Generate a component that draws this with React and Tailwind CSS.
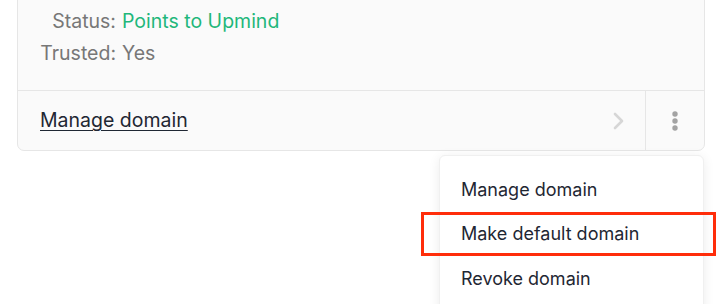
import React from 'react';

function Chevron() {
  return (
    <svg width="12" height="18" viewBox="0 0 12 18" fill="none">
      <path d="M2 2l7 7-7 7" stroke="#d6d6d6" strokeWidth="2.6" strokeLinecap="round" strokeLinejoin="round" />
    </svg>
  );
}

function Dots() {
  return (
    <svg width="6" height="20" viewBox="0 0 6 20" fill="#a3a3a3">
      <circle cx="3" cy="3" r="2.7" />
      <circle cx="3" cy="10" r="2.7" />
      <circle cx="3" cy="17" r="2.7" />
    </svg>
  );
}

export default function App() {
  return (
    <div className="relative w-[725px] h-[304px] overflow-hidden bg-white" style={{ fontFamily: 'Inter, "Noto Sans", sans-serif' }}>
      {/* Domain card */}
      <div className="ml-[17px] mt-[-12px] w-[688px] rounded-[7px] border border-[#e6e6e6] bg-[#fafafa]">
        <div className="grid grid-cols-[76px_1fr] gap-x-[6px] gap-y-[8px] pl-[22px] pt-[20px] pb-[25px] text-[19.5px] leading-[24px]">
          <span className="text-right text-[#777]">Status:</span>
          <span className="text-[#1fb77b]">Points to Upmind</span>
          <span className="text-right text-[#777]">Trusted:</span>
          <span className="text-[#777]">Yes</span>
        </div>
        <div className="flex h-[60px] border-t border-[#e6e6e6]">
          <div className="flex flex-1 items-center justify-between pl-[22px] pr-[20px]">
            <span className="text-[19.5px] text-[#1f2733] underline underline-offset-[3px] decoration-1">Manage domain</span>
            <Chevron />
          </div>
          <div className="flex w-[59px] items-center justify-center border-l border-[#e6e6e6]">
            <Dots />
          </div>
        </div>
      </div>

      {/* Dropdown menu */}
      <div className="absolute left-[439px] top-[155px] w-[265px] h-[170px] rounded-[6px] bg-white shadow-[0_2px_12px_rgba(0,0,0,0.08)] border border-[#f0f0f0]">
        <ul className="pt-[11px] text-[18px] text-[#1f2733]">
          <li className="flex h-[44px] items-center pl-[21px]">Manage domain</li>
          <li className="flex h-[45px] items-center pl-[21px]">Make default domain</li>
          <li className="flex h-[44px] items-center pl-[21px]">Revoke domain</li>
        </ul>
      </div>

      {/* Highlight annotation */}
      <div className="absolute left-[421px] top-[212px] w-[295px] h-[44px] border-[3px] border-[#ff2d0a]" />
    </div>
  );
}
